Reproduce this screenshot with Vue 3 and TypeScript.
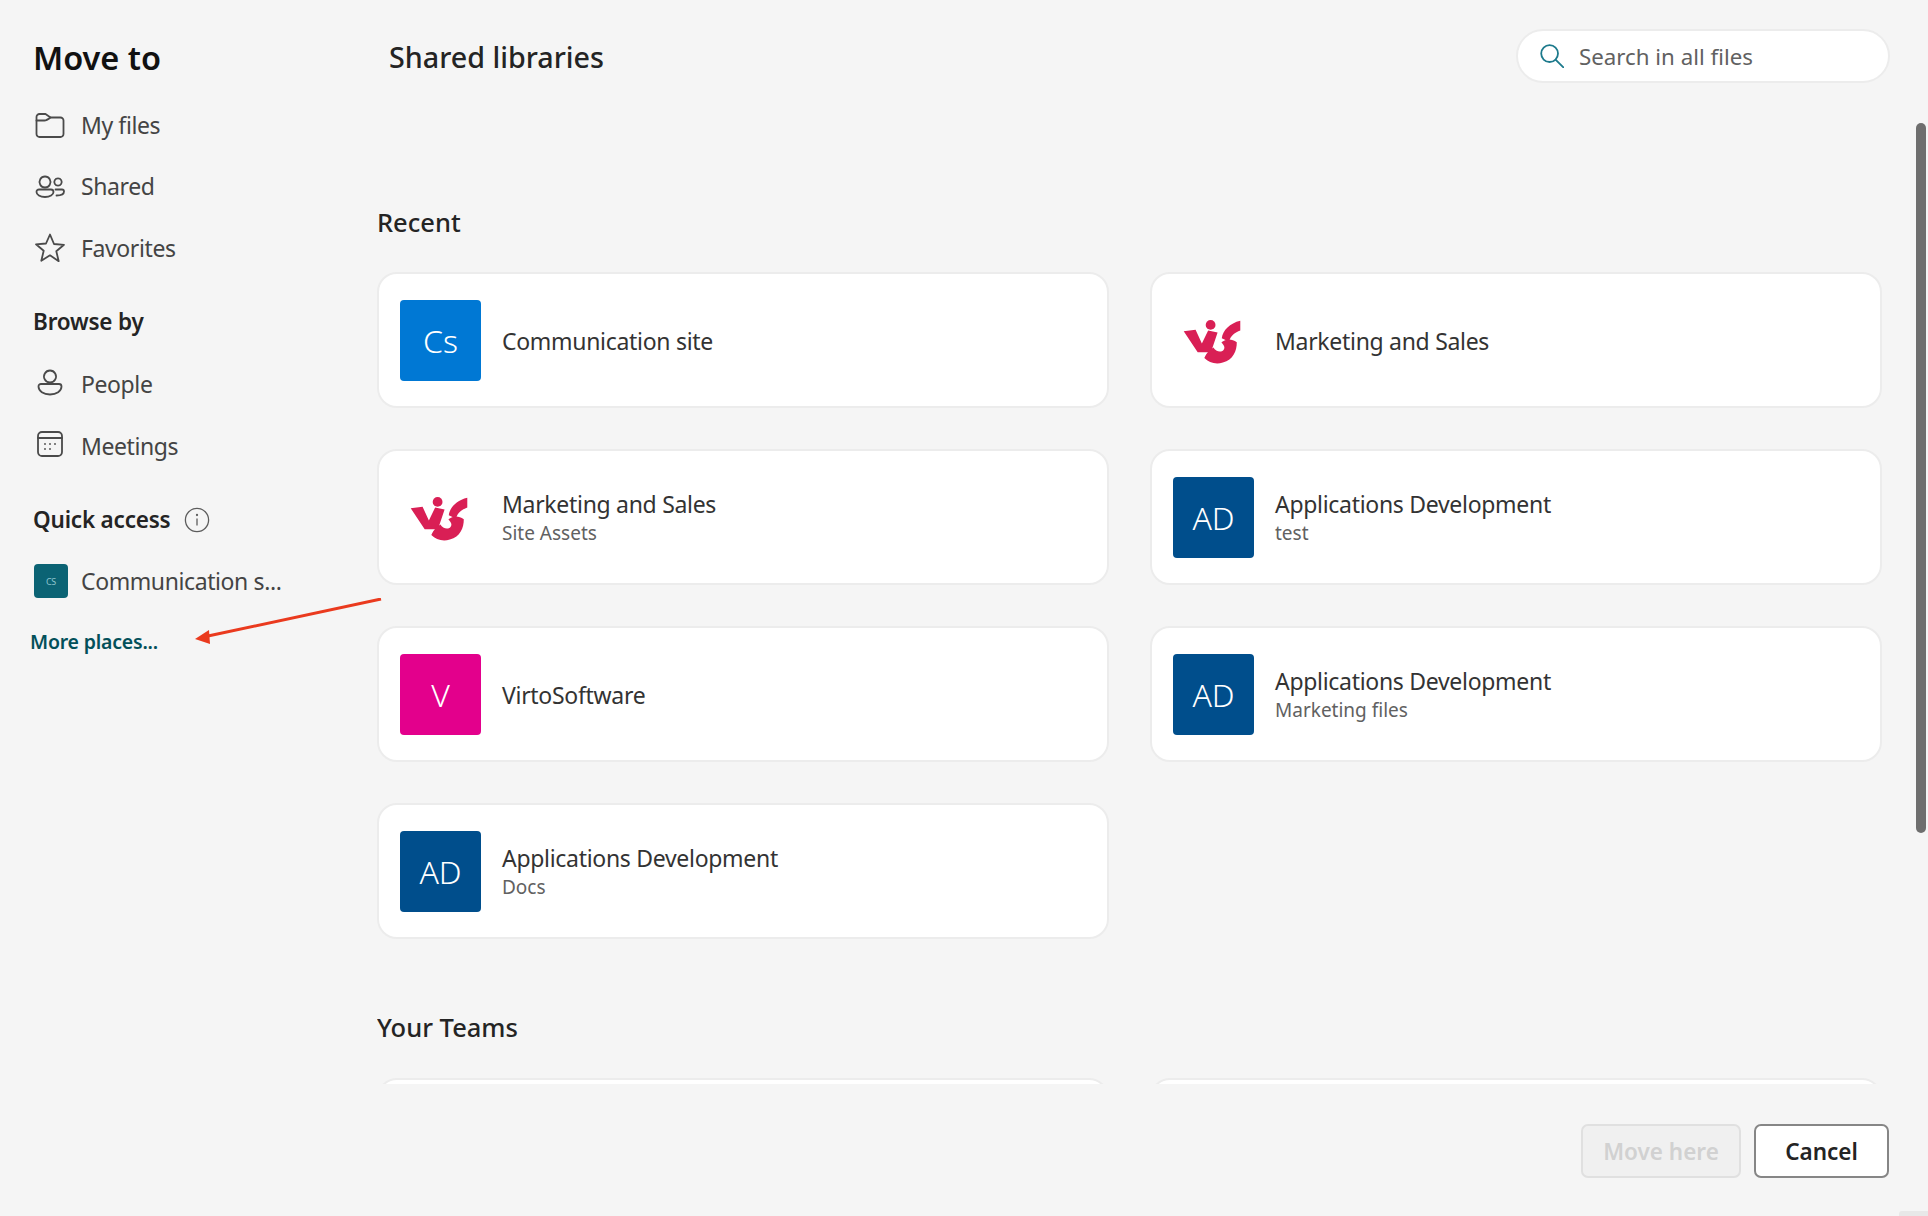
<template>
  <div class="dialog">
    <aside class="sidebar">
      <h1 class="title">Move to</h1>
      <a v-for="item in topNav" :key="item.label" class="nav-item">
        <svg class="nav-icon" viewBox="0 0 32 32" fill="none" stroke="#4a4a4a" stroke-width="1.8" stroke-linejoin="round" stroke-linecap="round">
          <path v-for="d in item.paths" :key="d" :d="d" />
        </svg>
        {{ item.label }}
      </a>
      <h2 class="nav-heading browse">Browse by</h2>
      <a v-for="item in browseNav" :key="item.label" class="nav-item">
        <svg class="nav-icon" viewBox="0 0 32 32" fill="none" stroke="#4a4a4a" stroke-width="1.8" stroke-linejoin="round" stroke-linecap="round">
          <path v-for="d in item.paths" :key="d" :d="d" />
        </svg>
        {{ item.label }}
      </a>
      <h2 class="nav-heading quick">
        Quick access
        <svg class="info-icon" viewBox="0 0 26 26" fill="none" stroke="#5c5c5c" stroke-width="1.3">
          <circle cx="13" cy="13" r="11.6" />
          <path d="M13 11.5v7" />
          <circle cx="13" cy="8" r=".5" />
        </svg>
      </h2>
      <a class="nav-item site-item">
        <span class="mini-tile">CS</span>
        <span>Communication s...</span>
      </a>
      <a class="more-link">More places...</a>
    </aside>

    <div class="main">
      <header class="top-bar">
        <h2 class="location">Shared libraries</h2>
        <div class="search">
          <svg class="search-icon" viewBox="0 0 24 24" fill="none" stroke="#1d7a8c" stroke-width="1.8" stroke-linecap="round">
            <circle cx="9.6" cy="9.6" r="8.4" />
            <path d="M15.8 15.8l7.6 7.6" />
          </svg>
          <span>Search in all files</span>
        </div>
      </header>

      <div class="scroller">
        <h3 class="section-title recent">Recent</h3>
        <div class="card-grid">
          <div v-for="lib in recent" :key="lib.name + lib.sub" class="card">
            <div v-if="lib.logo" class="logo-tile">
              <svg class="logo" viewBox="36 36 166 126" width="58" height="44" fill="#d91f55">
                <path d="M38 68 72 64 90 103 108 66 135 72 116 128H78z" />
                <circle cx="115" cy="50" r="14" />
                <path d="M200 38C170 45 150 65 147 88L168 98C172 80 185 72 200 66z" />
                <path d="M146 100C158 90 175 88 190 100 190 125 180 150 150 158 130 165 110 158 97 145 103 130 112 122 123 115 130 127 145 130 152 122 158 113 152 108 146 100z" />
              </svg>
            </div>
            <div v-else class="tile" :class="lib.tone">{{ lib.initials }}</div>
            <div class="card-text">
              <div class="card-name">{{ lib.name }}</div>
              <div v-if="lib.sub" class="card-sub">{{ lib.sub }}</div>
            </div>
          </div>
        </div>
        <h3 class="section-title teams">Your Teams</h3>
        <div class="card-grid">
          <div class="card stub"></div>
          <div class="card stub"></div>
        </div>
      </div>

      <footer class="actions">
        <button class="btn btn-disabled" disabled>Move here</button>
        <button class="btn btn-cancel">Cancel</button>
      </footer>
    </div>

    <div class="scrollbar"></div>
    <div class="corner"></div>

    <!-- red annotation arrow added on top of the screenshot -->
    <svg class="annotation" viewBox="0 0 188 48" width="188" height="48">
      <path d="M187 1 14 38" stroke="#ea3a1e" stroke-width="3" fill="none" />
      <path d="M1 41 15 32 16 46z" fill="#ea3a1e" />
    </svg>
  </div>
</template>

<script setup lang="ts">
interface NavItem {
  label: string
  paths: string[]
}

interface Library {
  name: string
  sub?: string
  initials?: string
  tone?: string
  logo?: boolean
}

const topNav: NavItem[] = [
  {
    label: 'My files',
    paths: [
      'M2.5 8a3 3 0 0 1 3-3h6l5 3.5h10a3 3 0 0 1 3 3V25a3 3 0 0 1-3 3h-21a3 3 0 0 1-3-3z',
      'M2.5 11.5h8c2 0 4-1.5 6-3',
    ],
  },
  {
    label: 'Shared',
    paths: [
      'M11 6.5a5.5 5.5 0 1 0 .01 0z',
      'M5 19.5h12a2.5 2.5 0 0 1 2.5 2.5c0 2.5-3.5 5-8.5 5s-8.5-2.5-8.5-5a2.5 2.5 0 0 1 2.5-2.5z',
      'M24 8.3a3.7 3.7 0 1 0 .01 0z',
      'M21.5 19.5h6.5a2 2 0 0 1 2 2c0 2.5-3 4-7.5 4',
    ],
  },
  {
    label: 'Favorites',
    paths: ['M16 2.5l4 9.5 10 .8-7.7 6.5 2.4 9.9L16 23.3l-8.7 5.4 2.4-9.9L2 12.3l10-.8z'],
  },
]

const browseNav: NavItem[] = [
  {
    label: 'People',
    paths: [
      'M16 2.5a6 6 0 1 0 .01 0z',
      'M7 16h18a2.5 2.5 0 0 1 2.5 2.5c0 4.5-5 8-11.5 8s-11.5-3.5-11.5-8A2.5 2.5 0 0 1 7 16z',
    ],
  },
  {
    label: 'Meetings',
    paths: [
      'M8 2h16a4 4 0 0 1 4 4v16a4 4 0 0 1-4 4H8a4 4 0 0 1-4-4V6a4 4 0 0 1 4-4z',
      'M4 8h24',
      'M11 14h.01M16 14h.01M21 14h.01M11 19h.01M16 19h.01',
    ],
  },
]

const recent: Library[] = [
  { name: 'Communication site', initials: 'Cs', tone: 'blue' },
  { name: 'Marketing and Sales', logo: true },
  { name: 'Marketing and Sales', sub: 'Site Assets', logo: true },
  { name: 'Applications Development', sub: 'test', initials: 'AD', tone: 'navy' },
  { name: 'VirtoSoftware', initials: 'V', tone: 'pink' },
  { name: 'Applications Development', sub: 'Marketing files', initials: 'AD', tone: 'navy' },
  { name: 'Applications Development', sub: 'Docs', initials: 'AD', tone: 'navy' },
]
</script>

<style>
html,
body {
  margin: 0;
  background: #f5f5f5;
}
</style>

<style scoped>
.dialog {
  position: relative;
  width: 1928px;
  height: 1216px;
  display: flex;
  overflow: hidden;
  background: #f5f5f5;
  font-family: "Noto Sans", "Open Sans", sans-serif;
  color: #242424;
}

.sidebar {
  width: 377px;
  flex-shrink: 0;
  box-sizing: border-box;
  padding: 36px 0 0 33px;
}

.title {
  margin: 0 0 14px;
  font-size: 32.5px;
  line-height: 44px;
  font-weight: 600;
  color: #111;
}

.nav-item {
  display: flex;
  align-items: center;
  height: 61.5px;
  gap: 15px;
  margin-left: 1px;
  font-size: 23px;
  letter-spacing: -0.4px;
  color: #444;
}

.nav-icon {
  width: 32px;
  height: 32px;
}

.nav-heading {
  display: flex;
  align-items: center;
  margin: 0;
  font-size: 22.5px;
  letter-spacing: -0.2px;
  line-height: 34px;
  font-weight: 600;
  color: #242424;
}

.browse {
  margin-top: 26px;
  margin-bottom: 15px;
}

.quick {
  margin-top: 26px;
  margin-bottom: 14px;
}

.info-icon {
  width: 26px;
  height: 26px;
  margin-left: 13px;
}

.site-item {
  gap: 13px;
}

.mini-tile {
  display: flex;
  align-items: center;
  justify-content: center;
  width: 34px;
  height: 34px;
  border-radius: 4px;
  background: #0b6374;
  color: #8fc5cf;
  font-size: 9px;
}

.more-link {
  display: block;
  margin: 15px 0 0 -3px;
  font-size: 19.5px;
  letter-spacing: -0.2px;
  line-height: 30px;
  font-weight: 600;
  color: #03505a;
}

.main {
  flex: 1;
  min-width: 0;
  display: flex;
  flex-direction: column;
}

.top-bar {
  display: flex;
  align-items: center;
  justify-content: space-between;
  box-sizing: border-box;
  height: 112px;
  padding: 30px 38px 30px 12px;
}

.location {
  margin: 0;
  font-size: 28.7px;
  font-weight: 500;
  color: #242424;
}

.search {
  display: flex;
  align-items: center;
  gap: 15px;
  box-sizing: border-box;
  width: 374px;
  height: 54px;
  padding-left: 22px;
  background: #fff;
  border: 2px solid #ececec;
  border-radius: 27px;
  font-size: 22.3px;
  color: #616161;
}

.search-icon {
  width: 24px;
  height: 24px;
}

.scroller {
  height: 972px;
  overflow: hidden;
  padding-right: 47px;
}

.section-title {
  margin: 0;
  font-size: 25.5px;
  line-height: 36px;
  font-weight: 500;
  color: #242424;
}

.recent {
  margin: 92px 0 32px;
}

.teams {
  margin: 70px 0 33px;
}

.card-grid {
  display: grid;
  grid-template-columns: 732px 732px;
  column-gap: 41px;
  row-gap: 41px;
}

.card {
  display: flex;
  align-items: center;
  gap: 21px;
  box-sizing: border-box;
  height: 136px;
  padding-left: 21px;
  background: #fff;
  border: 2px solid #ececec;
  border-radius: 20px;
}

.tile {
  display: flex;
  align-items: center;
  justify-content: center;
  width: 81px;
  height: 81px;
  border-radius: 4px;
  flex-shrink: 0;
  color: #fff;
  font-size: 32px;
  font-weight: 300;
}

.blue {
  background: #0078d4;
}

.navy {
  background: #004e8c;
}

.pink {
  background: #e3008c;
}

.logo-tile {
  display: flex;
  align-items: center;
  justify-content: center;
  width: 81px;
  height: 81px;
  flex-shrink: 0;
}

.logo {
  margin: 3px 3px 0 0;
}

.card-text {
  padding-top: 1px;
}

.card-name {
  font-size: 23px;
  letter-spacing: -0.3px;
  line-height: 32px;
  color: #333;
}

.card-sub {
  font-size: 19px;
  line-height: 27px;
  color: #616161;
}

.actions {
  display: flex;
  justify-content: flex-end;
  gap: 13px;
  padding: 40px 39px 0 0;
}

.btn {
  box-sizing: border-box;
  height: 54px;
  border-radius: 7px;
  font-family: inherit;
  font-size: 22.5px;
  font-weight: 600;
}

.btn-disabled {
  width: 160px;
  background: #f0f0f0;
  border: 2px solid #e0e0e0;
  color: #d1d1d1;
}

.btn-cancel {
  width: 135px;
  background: #fff;
  border: 2px solid #868686;
  color: #242424;
}

.scrollbar {
  position: absolute;
  top: 123px;
  left: 1916px;
  width: 10px;
  height: 710px;
  border-radius: 5px;
  background: #6e6e6e;
}

.corner {
  position: absolute;
  left: 1899px;
  top: 1211px;
  width: 29px;
  height: 5px;
  background: #e8e8e8;
  border-radius: 3px 0 0 0;
}

.annotation {
  position: absolute;
  left: 194px;
  top: 598px;
}
</style>
